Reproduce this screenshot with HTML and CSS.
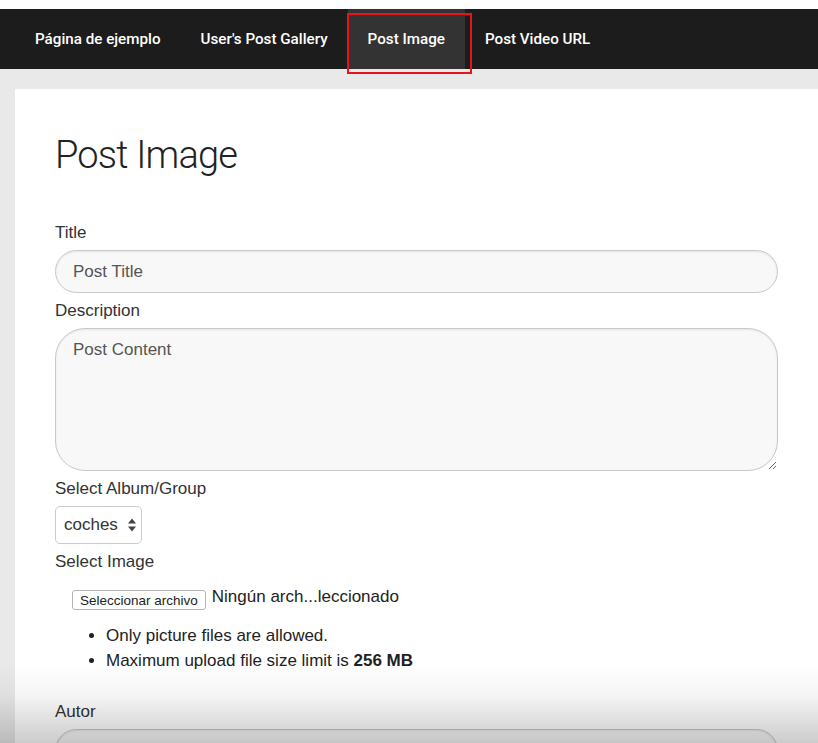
FILE: index.html
```html
<!DOCTYPE html>
<html lang="es">
<head>
    <meta charset="UTF-8">
    <meta name="viewport" content="width=device-width, initial-scale=1.0">
    <title>Post Image</title>
    <link rel="stylesheet" href="styles.css">
</head>
<body>
    <div class="top-strip"></div>
    <nav class="main-nav">
        <a href="#" class="nav-item">Página de ejemplo</a>
        <a href="#" class="nav-item">User's Post Gallery</a>
        <a href="#" class="nav-item active">Post Image</a>
        <a href="#" class="nav-item">Post Video URL</a>
        <!-- red highlight box drawn over the active tab -->
        <span class="highlight-box"></span>
    </nav>

    <div class="page">
        <div class="panel">
            <h1>Post Image</h1>

            <form class="post-form">
                <label for="postTitle" class="field-label first">Title</label>
                <input type="text" id="postTitle" class="round-input" placeholder="Post Title">

                <label for="postContent" class="field-label">Description</label>
                <textarea id="postContent" class="round-textarea" placeholder="Post Content"></textarea>

                <label class="field-label">Select Album/Group</label>
                <div class="fake-select">
                    <span>coches</span>
                    <svg class="select-arrows" width="10" height="16" viewBox="0 0 10 16">
                        <path d="M5 1.5 L9 6.5 L1 6.5 Z" fill="#444"/>
                        <path d="M5 14.5 L9 9.5 L1 9.5 Z" fill="#444"/>
                    </svg>
                </div>

                <label class="field-label">Select Image</label>
                <div class="file-row">
                    <button type="button" class="file-button">Seleccionar archivo</button>
                    <span class="file-name">Ningún arch...leccionado</span>
                </div>

                <ul class="upload-notes">
                    <li>Only picture files are allowed.</li>
                    <li>Maximum upload file size limit is <strong>256 MB</strong></li>
                </ul>

                <label for="postAuthor" class="field-label autor">Autor</label>
                <input type="text" id="postAuthor" class="round-input">
            </form>
        </div>
    </div>

    <div class="bottom-shade"></div>
</body>
</html>
```

FILE: styles.css
```css
body {
    margin: 0;
    font-family: 'Liberation Sans', Arial, sans-serif;
    background-color: #e9e9e9;
    color: #333;
}

.top-strip {
    height: 9px;
    background-color: #fff;
}

.main-nav {
    position: relative;
    display: flex;
    height: 60px;
    padding-left: 15px;
    background-color: #1c1c1c;
}

.nav-item {
    display: flex;
    align-items: center;
    padding: 0 20px;
    color: #fff;
    text-decoration: none;
    font-family: 'Roboto', 'Liberation Sans', sans-serif;
    font-weight: 500;
    font-size: 15.2px;
}

.nav-item.active {
    background-color: #333;
}

.highlight-box {
    position: absolute;
    left: 347px;
    top: 4px;
    width: 121px;
    height: 57px;
    border: 2px solid #e8141b;
    pointer-events: none;
}

.page {
    padding: 20px 0 0 15px;
}

.panel {
    background-color: #fff;
    padding: 43px 40px 40px 40px;
    min-height: 700px;
}

h1 {
    margin: 0;
    font-family: 'Roboto', 'Liberation Sans', sans-serif;
    font-weight: 300;
    font-size: 38px;
    line-height: 46px;
    letter-spacing: -0.8px;
    color: #222;
}

.post-form {
    display: flex;
    flex-direction: column;
    align-items: flex-start;
}

.field-label {
    font-size: 17px;
    line-height: 18px;
    margin-top: 9px;
    color: #333;
}

.field-label.first {
    margin-top: 46px;
}

.field-label.autor {
    margin-top: 30px;
}

.round-input,
.round-textarea {
    box-sizing: border-box;
    width: 100%;
    margin-top: 8px;
    border: 1px solid #c8c8c8;
    background-color: #f8f8f8;
    box-shadow: inset 0 1px 2px rgba(0, 0, 0, 0.08);
    font-family: 'Liberation Sans', Arial, sans-serif;
    font-size: 17px;
    color: #333;
    outline: none;
}

.round-input {
    height: 43px;
    padding: 0 17px;
    border-radius: 22px;
}

.round-textarea {
    height: 143px;
    padding: 11px 17px;
    border-radius: 30px;
    resize: both;
}

.round-input::placeholder,
.round-textarea::placeholder {
    color: #555;
}

.fake-select {
    box-sizing: border-box;
    display: flex;
    align-items: center;
    gap: 9px;
    width: 87px;
    height: 38px;
    margin-top: 8px;
    padding: 0 7px 0 8px;
    border: 1px solid #ccc;
    border-radius: 5px;
    font-size: 17px;
    color: #333;
}

.select-arrows {
    flex-shrink: 0;
}

.file-row {
    display: flex;
    align-items: center;
    gap: 6px;
    margin-top: 19px;
    margin-left: 17px;
}

.file-button {
    height: 20px;
    padding: 0 7px;
    border: 1px solid #b5b5b5;
    border-radius: 3px;
    background-color: #fff;
    font-family: 'Liberation Sans', Arial, sans-serif;
    font-size: 13.5px;
    color: #222;
}

.file-name {
    font-size: 17px;
    color: #222;
    margin-top: -6px;
}

.upload-notes {
    margin: 13px 0 0 0;
    padding-left: 51px;
    font-size: 17px;
    line-height: 25px;
    color: #222;
}

.bottom-shade {
    position: fixed;
    left: 0;
    right: 0;
    bottom: 0;
    height: 80px;
    background: linear-gradient(rgba(0, 0, 0, 0), rgba(0, 0, 0, 0.04) 40%, rgba(0, 0, 0, 0.2));
    pointer-events: none;
}
```
